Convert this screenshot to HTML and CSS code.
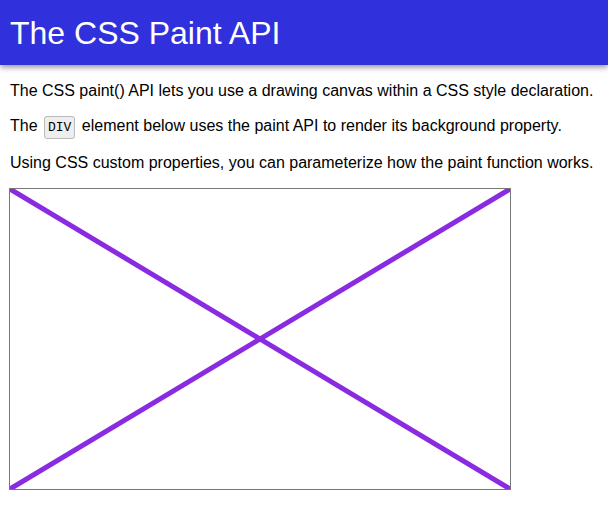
FILE: index.html
```html
<!DOCTYPE html>
<html>
<head>
<meta charset="utf-8">
<link rel="stylesheet" href="styles.css">
</head>
<body>
<header class="top">
  <h1 class="title">The CSS Paint API</h1>
</header>
<main class="content">
  <p class="text">The CSS paint() API lets you use a drawing canvas within a CSS style declaration.</p>
  <p class="text">The <code class="tag">DIV</code> element below uses the paint API to render its background property.</p>
  <p class="text">Using CSS custom properties, you can parameterize how the paint function works.</p>
  <div class="canvas">
    <svg class="cross" width="500" height="300" viewBox="0 0 500 300">
      <line x1="0" y1="0" x2="500" y2="300" stroke="#8a2be2" stroke-width="5"/>
      <line x1="500" y1="0" x2="0" y2="300" stroke="#8a2be2" stroke-width="5"/>
    </svg>
  </div>
</main>
</body>
</html>
```
FILE: styles.css
```css
html, body {
  margin: 0;
  padding: 0;
  background: #fff;
}
body {
  font-family: "Liberation Sans", Arial, sans-serif;
  color: #000;
}
.top {
  background: #3030dd;
  height: 65px;
  box-shadow: 0 2px 6px rgba(0,0,0,0.45);
  display: flex;
  align-items: center;
}
.title {
  margin: 0;
  padding: 0 10px;
  font-size: 32px;
  font-weight: normal;
  color: #fff;
  line-height: 1;
}
.content {
  padding: 16px 9px 0 10px;
}
.text {
  margin: 0 0 16px 0;
  font-size: 16px;
  line-height: 19px;
}
.tag {
  font-family: "Liberation Mono", "DejaVu Sans Mono", monospace;
  font-size: 13px;
  background: #eee;
  border: 1px solid #bbb;
  border-radius: 3px;
  padding: 3px 3px;
  margin: 0 2px;
}
.canvas {
  width: 500px;
  height: 300px;
  border: 1px solid #777;
  margin-left: -1px;
}
.cross {
  display: block;
}
```
